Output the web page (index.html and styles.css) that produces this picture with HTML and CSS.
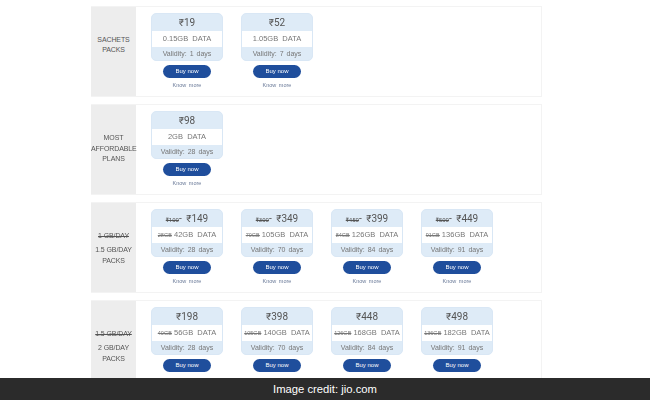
FILE: index.html
```html
<!DOCTYPE html>
<html lang="en">
<head>
  <meta charset="UTF-8" />
  <title>Jio plans</title>
  <link rel="stylesheet" href="styles.css">
</head>
<body>
  <div class="page">
    <main class="plans">

      <!-- Sachets -->
      <section class="row">
        <div class="label label-high"><p>SACHETS<br>PACKS</p></div>
        <div class="cards">
          <div class="plan">
            <div class="card">
              <div class="price">₹19</div>
              <div class="data">0.15GB&nbsp; DATA</div>
              <div class="validity">Validity: 1 days</div>
            </div>
            <a class="buy">Buy now</a>
            <a class="more">Know more</a>
          </div>
          <div class="plan">
            <div class="card">
              <div class="price">₹52</div>
              <div class="data">1.05GB&nbsp; DATA</div>
              <div class="validity">Validity: 7 days</div>
            </div>
            <a class="buy">Buy now</a>
            <a class="more">Know more</a>
          </div>
        </div>
      </section>

      <!-- Most affordable -->
      <section class="row">
        <div class="label"><p>MOST<br>AFFORDABLE<br>PLANS</p></div>
        <div class="cards">
          <div class="plan">
            <div class="card">
              <div class="price">₹98</div>
              <div class="data">2GB&nbsp; DATA</div>
              <div class="validity">Validity: 28 days</div>
            </div>
            <a class="buy">Buy now</a>
            <a class="more">Know more</a>
          </div>
        </div>
      </section>

      <!-- 1.5 GB/day -->
      <section class="row">
        <div class="label label-low"><p class="old-label">1 GB/DAY</p><p>1.5 GB/DAY<br>PACKS</p></div>
        <div class="cards">
          <div class="plan">
            <div class="card">
              <div class="price"><s>₹100</s>- ₹149</div>
              <div class="data"><s>28GB</s> 42GB&nbsp; DATA</div>
              <div class="validity">Validity: 28 days</div>
            </div>
            <a class="buy">Buy now</a>
            <a class="more">Know more</a>
          </div>
          <div class="plan">
            <div class="card">
              <div class="price"><s>₹300</s>- ₹349</div>
              <div class="data"><s>70GB</s> 105GB&nbsp; DATA</div>
              <div class="validity">Validity: 70 days</div>
            </div>
            <a class="buy">Buy now</a>
            <a class="more">Know more</a>
          </div>
          <div class="plan">
            <div class="card">
              <div class="price"><s>₹450</s>- ₹399</div>
              <div class="data"><s>84GB</s> 126GB&nbsp; DATA</div>
              <div class="validity">Validity: 84 days</div>
            </div>
            <a class="buy">Buy now</a>
            <a class="more">Know more</a>
          </div>
          <div class="plan">
            <div class="card">
              <div class="price"><s>₹500</s>- ₹449</div>
              <div class="data"><s>91GB</s> 136GB&nbsp; DATA</div>
              <div class="validity">Validity: 91 days</div>
            </div>
            <a class="buy">Buy now</a>
            <a class="more">Know more</a>
          </div>
        </div>
      </section>

      <!-- 2 GB/day, runs under the credit bar -->
      <section class="row">
        <div class="label label-low"><p class="old-label">1.5 GB/DAY</p><p>2 GB/DAY<br>PACKS</p></div>
        <div class="cards">
          <div class="plan">
            <div class="card">
              <div class="price">₹198</div>
              <div class="data"><s>40GB</s> 56GB&nbsp; DATA</div>
              <div class="validity">Validity: 28 days</div>
            </div>
            <a class="buy">Buy now</a>
          </div>
          <div class="plan">
            <div class="card">
              <div class="price">₹398</div>
              <div class="data"><s>105GB</s> 140GB&nbsp; DATA</div>
              <div class="validity">Validity: 70 days</div>
            </div>
            <a class="buy">Buy now</a>
          </div>
          <div class="plan">
            <div class="card">
              <div class="price">₹448</div>
              <div class="data"><s>126GB</s> 168GB&nbsp; DATA</div>
              <div class="validity">Validity: 84 days</div>
            </div>
            <a class="buy">Buy now</a>
          </div>
          <div class="plan">
            <div class="card">
              <div class="price">₹498</div>
              <div class="data"><s>136GB</s> 182GB&nbsp; DATA</div>
              <div class="validity">Validity: 91 days</div>
            </div>
            <a class="buy">Buy now</a>
          </div>
        </div>
      </section>

    </main>
    <footer class="credit">Image credit: jio.com</footer>
  </div>
</body>
</html>
```

FILE: styles.css
```css
body {
  margin: 0;
  background-color: #ffffff;
  font-family: "Liberation Sans", Arial, sans-serif;
}

.page {
  display: flex;
  flex-direction: column;
  width: 650px;
  height: 400px;
  overflow: hidden;
}

.plans {
  flex: 1;
  min-height: 0;
  overflow: hidden;
  display: flex;
  flex-direction: column;
  gap: 7px;
  padding: 5.5px 0 0 91px;
  filter: blur(0.4px);
}

.row {
  display: flex;
  flex-shrink: 0;
  width: 451px;
  height: 91px;
  box-sizing: border-box;
  border: 1px solid #f3f3f3;
  border-left: none;
}

.label {
  width: 45px;
  flex-shrink: 0;
  box-sizing: border-box;
  background-color: #ededed;
  color: #555555;
  font-size: 7px;
  line-height: 10.5px;
  text-align: center;
  display: flex;
  flex-direction: column;
  justify-content: center;
  gap: 4px;
  white-space: nowrap;
  letter-spacing: -0.1px;
}

.label-high {
  padding-bottom: 12px;
}

.label-low {
  padding-top: 3px;
}

.label p {
  margin: 0;
}

.old-label {
  text-decoration: line-through;
}

.cards {
  display: flex;
  gap: 18px;
  padding: 6.5px 0 0 15px;
}

.plan {
  width: 72px;
  display: flex;
  flex-direction: column;
  align-items: center;
}

.card {
  width: 100%;
  box-sizing: border-box;
  height: 48px;
  background-color: #deebf7;
  border: 1px solid #d9e7f5;
  border-radius: 5px;
  overflow: hidden;
  text-align: center;
  display: flex;
  flex-direction: column;
  white-space: nowrap;
  color: #777777;
}

.price {
  height: 17px;
  line-height: 17px;
  font-family: Roboto, "Liberation Sans", sans-serif;
  font-size: 10px;
  word-spacing: 2px;
  color: #555555;
}

.price s {
  font-size: 6px;
}

.data {
  height: 16px;
  line-height: 16px;
  font-size: 7.5px;
  background-color: #ffffff;
}

.data s {
  font-size: 5.5px;
}

.validity {
  height: 13px;
  line-height: 13px;
  font-size: 7px;
  word-spacing: 1px;
}

.buy {
  width: 48px;
  height: 13px;
  margin-top: 4px;
  border-radius: 7px;
  background-color: #1f4e9c;
  color: #ffffff;
  font-size: 6px;
  line-height: 13px;
  text-align: center;
}

.more {
  margin-top: 3px;
  color: #6a7a98;
  font-size: 5.5px;
  line-height: 8px;
  word-spacing: 1px;
}

.credit {
  height: 22px;
  flex-shrink: 0;
  background-color: #2b2b2b;
  color: #ffffff;
  font-size: 11.25px;
  line-height: 22px;
  text-align: center;
}
```
